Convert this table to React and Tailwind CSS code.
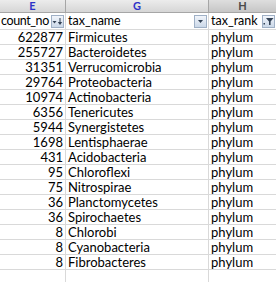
import React from 'react';

const rows = [
  [622877, 'Firmicutes'],
  [255727, 'Bacteroidetes'],
  [31351, 'Verrucomicrobia'],
  [29764, 'Proteobacteria'],
  [10974, 'Actinobacteria'],
  [6356, 'Tenericutes'],
  [5944, 'Synergistetes'],
  [1698, 'Lentisphaerae'],
  [431, 'Acidobacteria'],
  [95, 'Chloroflexi'],
  [75, 'Nitrospirae'],
  [36, 'Planctomycetes'],
  [36, 'Spirochaetes'],
  [8, 'Chlorobi'],
  [8, 'Cyanobacteria'],
  [8, 'Fibrobacteres'],
];

function DropBtn({ kind }) {
  return (
    <span className="absolute right-[1px] top-[2px] w-[13px] h-[13px] border border-[#9fb0c6] bg-gradient-to-b from-[#f1f5fb] to-[#cbd8e8] flex items-center justify-center">
      <svg width="11" height="9" viewBox="0 0 11 9">
        {kind === 'plain' && <path d="M3 3h5L5.5 6z" fill="#334255" />}
        {kind === 'sort' && (
          <g fill="#334255">
            <path d="M0.5 4h4L2.5 6.5z" />
            <rect x="7.5" y="1" width="1" height="6" />
            <path d="M5.8 5h4.4L8 8z" />
          </g>
        )}
        {kind === 'filter' && (
          <g fill="#334255">
            <rect x="0.5" y="6" width="1.5" height="1.5" />
            <path d="M3 1h7.5L7.6 4.5V8H6V4.5z" />
          </g>
        )}
      </svg>
    </span>
  );
}

export default function App() {
  const cell = 'border-r border-b border-[#d9d9d9] h-[15px] leading-[15px]';
  const head = 'relative h-[17px] border-b border-[#d9d9d9] leading-[16px] whitespace-nowrap text-[12.5px]';
  return (
    <div className="w-[276px] h-[282px] overflow-hidden bg-white text-[13px] text-black" style={{ fontFamily: 'Lato, "Liberation Sans", sans-serif' }}>
      <div className="grid grid-cols-[66px_143px_67px]">
        <div className="h-[13px] flex items-center justify-center bg-gradient-to-b from-[#ececec] to-[#d6d6d6] border-r border-b border-[#a6a6a6] text-[11px] font-bold text-[#2c32c8]">E</div>
        <div className="h-[13px] flex items-center justify-center bg-gradient-to-b from-[#ececec] to-[#d6d6d6] border-r border-b border-[#a6a6a6] text-[11px] font-bold text-[#2c32c8]">G</div>
        <div className="h-[13px] flex items-center justify-center bg-gradient-to-b from-[#dedede] to-[#c6c6c6] border-b border-[#a6a6a6] text-[11px] font-bold text-[#4a4a4a]">H</div>

        <div className={`${head} border-r pl-[1px] tracking-[-0.4px]`}>count_no<DropBtn kind="sort" /></div>
        <div className={`${head} border-r pl-[2px]`}>tax_name<DropBtn kind="plain" /></div>
        <div className={`${head} pl-[2px]`}>tax_rank<DropBtn kind="filter" /></div>

        {rows.map(([n, name], i) => (
          <React.Fragment key={i}>
            <div className={`${cell} text-right pr-[2px]`}>{n}</div>
            <div className={`${cell} pl-[2px] whitespace-nowrap overflow-hidden`}>{name}</div>
            <div className={`${cell} border-r-0 pl-[2px]`}>phylum</div>
          </React.Fragment>
        ))}
        <div className={cell}></div>
        <div className={cell}></div>
        <div className={`${cell} border-r-0`}></div>
      </div>
    </div>
  );
}
